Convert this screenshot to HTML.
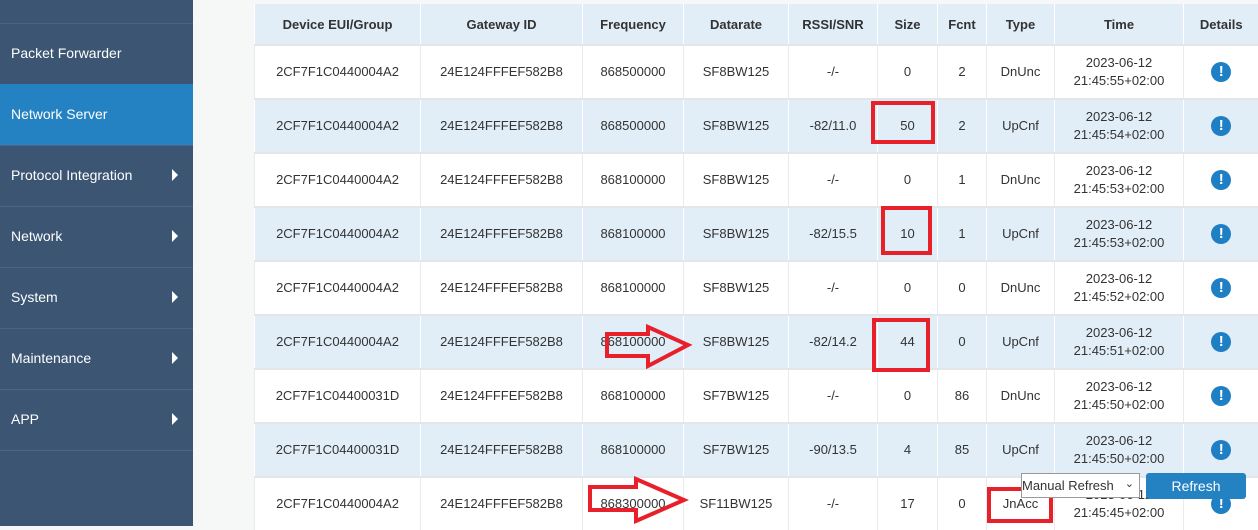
<!DOCTYPE html>
<html><head><style>
body{margin:0;width:1258px;height:526px;overflow:hidden;background:#f6f7f7;font-family:"Liberation Sans",sans-serif;position:relative}
#side{position:absolute;left:0;top:0;width:193px;height:526px;background:#3b5573}
.mi{position:absolute;left:0;width:193px;height:61px;border-top:1px solid #4b6584;color:#fff;font-size:14px;line-height:58px;padding-left:11px;box-sizing:border-box}
.mi.act{background:#2481c2;border-top-color:#2481c2}
.mi .ar{position:absolute;right:15px;top:23px;width:0;height:0;border-left:6px solid #fff;border-top:6px solid transparent;border-bottom:6px solid transparent}
table{position:absolute;left:254px;top:4px;width:1004px;border-collapse:collapse;font-size:13px;color:#333;table-layout:fixed}
th{height:40px;background:#e1eef8;font-weight:bold;border-left:1px solid #fff;text-align:center;padding:0}
td{height:52px;text-align:center;padding:0;border-top:2px solid #e3e6e8;border-left:1px solid #e8ecef;line-height:18px}
tr:nth-child(odd) td{background:#e1eef8;border-left-color:#fff}
tr:nth-child(even) td{background:#fff}
.i{display:inline-block;width:20px;height:20px;border-radius:50%;background:#1e7fc4;color:#fff;font-weight:bold;font-size:15px;line-height:20px}
.rb{position:absolute;border:4px solid #e8202a;box-sizing:border-box}
</style></head><body>
<div id="side">
<div class="mi" style="top:23px">Packet Forwarder</div>
<div class="mi act" style="top:84px">Network Server</div>
<div class="mi" style="top:145px">Protocol Integration<span class="ar"></span></div>
<div class="mi" style="top:206px">Network<span class="ar"></span></div>
<div class="mi" style="top:267px">System<span class="ar"></span></div>
<div class="mi" style="top:328px">Maintenance<span class="ar"></span></div>
<div class="mi" style="top:389px">APP<span class="ar"></span></div>
<div class="mi" style="top:450px;height:1px"></div>
</div>
<table>
<colgroup><col style="width:166px"><col style="width:162px"><col style="width:101px"><col style="width:105px"><col style="width:89px"><col style="width:60px"><col style="width:49px"><col style="width:68px"><col style="width:129px"><col style="width:75px"></colgroup>
<tr><th>Device EUI/Group</th><th>Gateway ID</th><th>Frequency</th><th>Datarate</th><th>RSSI/SNR</th><th>Size</th><th>Fcnt</th><th>Type</th><th>Time</th><th>Details</th></tr>
<tr><td>2CF7F1C0440004A2</td><td>24E124FFFEF582B8</td><td>868500000</td><td>SF8BW125</td><td>-/-</td><td>0</td><td>2</td><td>DnUnc</td><td>2023-06-12<br>21:45:55+02:00</td><td><span class="i">!</span></td></tr>
<tr><td>2CF7F1C0440004A2</td><td>24E124FFFEF582B8</td><td>868500000</td><td>SF8BW125</td><td>-82/11.0</td><td>50</td><td>2</td><td>UpCnf</td><td>2023-06-12<br>21:45:54+02:00</td><td><span class="i">!</span></td></tr>
<tr><td>2CF7F1C0440004A2</td><td>24E124FFFEF582B8</td><td>868100000</td><td>SF8BW125</td><td>-/-</td><td>0</td><td>1</td><td>DnUnc</td><td>2023-06-12<br>21:45:53+02:00</td><td><span class="i">!</span></td></tr>
<tr><td>2CF7F1C0440004A2</td><td>24E124FFFEF582B8</td><td>868100000</td><td>SF8BW125</td><td>-82/15.5</td><td>10</td><td>1</td><td>UpCnf</td><td>2023-06-12<br>21:45:53+02:00</td><td><span class="i">!</span></td></tr>
<tr><td>2CF7F1C0440004A2</td><td>24E124FFFEF582B8</td><td>868100000</td><td>SF8BW125</td><td>-/-</td><td>0</td><td>0</td><td>DnUnc</td><td>2023-06-12<br>21:45:52+02:00</td><td><span class="i">!</span></td></tr>
<tr><td>2CF7F1C0440004A2</td><td>24E124FFFEF582B8</td><td>868100000</td><td>SF8BW125</td><td>-82/14.2</td><td>44</td><td>0</td><td>UpCnf</td><td>2023-06-12<br>21:45:51+02:00</td><td><span class="i">!</span></td></tr>
<tr><td>2CF7F1C04400031D</td><td>24E124FFFEF582B8</td><td>868100000</td><td>SF7BW125</td><td>-/-</td><td>0</td><td>86</td><td>DnUnc</td><td>2023-06-12<br>21:45:50+02:00</td><td><span class="i">!</span></td></tr>
<tr><td>2CF7F1C04400031D</td><td>24E124FFFEF582B8</td><td>868100000</td><td>SF7BW125</td><td>-90/13.5</td><td>4</td><td>85</td><td>UpCnf</td><td>2023-06-12<br>21:45:50+02:00</td><td><span class="i">!</span></td></tr>
<tr><td>2CF7F1C0440004A2</td><td>24E124FFFEF582B8</td><td>868300000</td><td>SF11BW125</td><td>-/-</td><td>17</td><td>0</td><td>JnAcc</td><td>2023-06-12<br>21:45:45+02:00</td><td><span class="i">!</span></td></tr>
</table>
<div class="rb" style="left:871px;top:101px;width:64px;height:43px"></div>
<div class="rb" style="left:881px;top:206px;width:51px;height:49px"></div>
<div class="rb" style="left:872px;top:318px;width:58px;height:54px"></div>
<div class="rb" style="left:987px;top:487px;width:66px;height:36px"></div>
<svg style="position:absolute;left:0;top:0" width="1258" height="526"><g fill="none" stroke="#e8202a" stroke-width="4" stroke-linejoin="miter">
<polygon points="607,334 648,334 648,327 688,345 648,366 648,356 607,356"/>
<polygon points="590,487 636,487 636,479 684,500 636,521 636,510 590,510"/></g></svg>
<div style="position:absolute;left:1021px;top:473px;width:119px;height:25px;background:#fff;border:1px solid #999;box-sizing:border-box;font-size:13px;color:#333;line-height:23px">Manual Refresh<span style="position:absolute;right:5px;top:-1px;font-size:11px">&#8964;</span></div>
<div style="position:absolute;left:1146px;top:473px;width:100px;height:26px;background:#2481c2;border-radius:3px;color:#fff;font-size:14px;text-align:center;line-height:26px">Refresh</div>
</body></html>
